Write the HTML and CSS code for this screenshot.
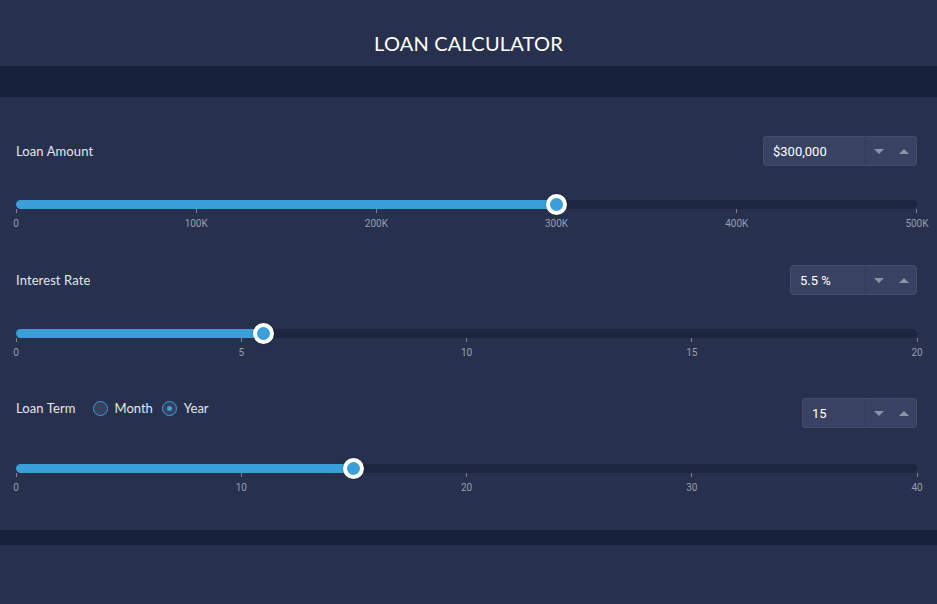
FILE: index.html
```html
<!DOCTYPE html>
<html lang="en">
<head>
    <meta charset="UTF-8">
    <meta name="viewport" content="width=device-width, initial-scale=1.0">
    <title>Loan Calculator</title>
    <link rel="stylesheet" href="styles.css">
</head>
<body>

<div class="header">
    <div class="title">LOAN CALCULATOR</div>
</div>
<div class="band"></div>

<div class="calculator">

    <!-- Loan amount -->
    <div class="field">
        <div class="field-head">
            <label class="field-label" for="amount">Loan Amount</label>
            <div class="spinner spinner-wide">
                <input type="text" id="amount" value="$300,000">
                <div class="spin-buttons">
                    <button class="spin-down"></button>
                    <button class="spin-up"></button>
                </div>
            </div>
        </div>
        <div class="slider">
            <div class="track">
                <div class="fill" style="width: 60%"></div>
                <div class="thumb" style="left: 60%"></div>
            </div>
            <div class="scale">
                <div class="mark"><span class="tick"></span><span>0</span></div>
                <div class="mark"><span class="tick"></span><span>100K</span></div>
                <div class="mark"><span class="tick"></span><span>200K</span></div>
                <div class="mark"><span class="tick"></span><span>300K</span></div>
                <div class="mark"><span class="tick"></span><span>400K</span></div>
                <div class="mark"><span class="tick"></span><span>500K</span></div>
            </div>
        </div>
    </div>

    <!-- Interest rate -->
    <div class="field">
        <div class="field-head">
            <label class="field-label" for="rate">Interest Rate</label>
            <div class="spinner spinner-mid">
                <input type="text" id="rate" value="5.5 %">
                <div class="spin-buttons">
                    <button class="spin-down"></button>
                    <button class="spin-up"></button>
                </div>
            </div>
        </div>
        <div class="slider">
            <div class="track">
                <div class="fill" style="width: 27.5%"></div>
                <div class="thumb" style="left: 27.5%"></div>
            </div>
            <div class="scale">
                <div class="mark"><span class="tick"></span><span>0</span></div>
                <div class="mark"><span class="tick"></span><span>5</span></div>
                <div class="mark"><span class="tick"></span><span>10</span></div>
                <div class="mark"><span class="tick"></span><span>15</span></div>
                <div class="mark"><span class="tick"></span><span>20</span></div>
            </div>
        </div>
    </div>

    <!-- Loan term -->
    <div class="field field-term">
        <div class="field-head">
            <div class="term-group">
                <label class="field-label" for="term">Loan Term</label>
                <label class="radio"><input type="radio" name="unit" value="month"> Month</label>
                <label class="radio"><input type="radio" name="unit" value="year" checked> Year</label>
            </div>
            <div class="spinner spinner-small">
                <input type="text" id="term" value="15">
                <div class="spin-buttons">
                    <button class="spin-down"></button>
                    <button class="spin-up"></button>
                </div>
            </div>
        </div>
        <div class="slider">
            <div class="track">
                <div class="fill" style="width: 37.5%"></div>
                <div class="thumb" style="left: 37.5%"></div>
            </div>
            <div class="scale">
                <div class="mark"><span class="tick"></span><span>0</span></div>
                <div class="mark"><span class="tick"></span><span>10</span></div>
                <div class="mark"><span class="tick"></span><span>20</span></div>
                <div class="mark"><span class="tick"></span><span>30</span></div>
                <div class="mark"><span class="tick"></span><span>40</span></div>
            </div>
        </div>
    </div>

</div>

<div class="band band-thin"></div>

</body>
</html>
```

FILE: styles.css
```css
/* Color scheme */
:root {
    --navy: #27304d;
    --deep-navy: #18213b;
    --track: #1e2540;
    --blue: #3a9fd8;
    --field: #394263;
    --muted: #9a9eae;
    --text: #e3e6ee;
}

* {
    box-sizing: border-box;
}

body {
    font-family: Lato, 'Open Sans', sans-serif;
    background-color: var(--navy);
    color: var(--text);
    margin: 0;
    padding: 0;
}

.header {
    height: 66px;
    padding-top: 31px;
    text-align: center;
}

.title {
    font-size: 20px;
    line-height: 24px;
    color: #ffffff;
    letter-spacing: 0.2px;
}

.band {
    height: 31px;
    background-color: var(--deep-navy);
}

.band-thin {
    height: 15px;
}

.calculator {
    padding: 39px 20px 36px 16px;
}

.field {
    margin-bottom: 35px;
}

.field:last-child {
    margin-bottom: 0;
}

.field-head {
    display: flex;
    justify-content: space-between;
    align-items: center;
}

.field-label {
    font-size: 13px;
    letter-spacing: 0.1px;
}

/* Number spinner */
.spinner {
    display: flex;
    height: 30px;
    background-color: var(--field);
    border: 1px solid #434c6d;
    border-radius: 3px;
}

.spinner input {
    width: 100%;
    min-width: 0;
    background: none;
    border: none;
    border-right: 1px solid #323a5a;
    color: #ffffff;
    font-family: Roboto, sans-serif;
    font-size: 13px;
    padding: 0 9px;
    outline: none;
}

.spinner-wide {
    width: 154px;
}

.spinner-mid {
    width: 127px;
}

.spinner-small {
    width: 115px;
}

.spin-buttons {
    display: flex;
    flex: 0 0 50px;
}

.spin-buttons button {
    flex: 1;
    background: none;
    border: none;
    padding: 0;
    position: relative;
    cursor: pointer;
}

.spin-buttons button:before {
    content: "";
    position: absolute;
    left: 50%;
    top: 50%;
    margin-left: -5px;
    margin-top: -2px;
    border-left: 5px solid transparent;
    border-right: 5px solid transparent;
}

.spin-down:before {
    border-top: 5px solid #8e92a4;
}

.spin-up:before {
    border-bottom: 5px solid #8e92a4;
}

/* Slider */
.slider {
    margin-top: 34px;
}

.track {
    position: relative;
    height: 9px;
    background-color: var(--track);
    border-radius: 5px;
}

.fill {
    height: 100%;
    background-color: var(--blue);
    border-radius: 5px 0 0 5px;
}

.thumb {
    position: absolute;
    top: 50%;
    width: 21px;
    height: 21px;
    margin: -10.5px 0 0 -10.5px;
    background-color: var(--blue);
    border: 4.5px solid #ffffff;
    border-radius: 50%;
    box-shadow: 0 0 2px rgba(0, 0, 0, 0.3);
}

.scale {
    display: flex;
    justify-content: space-between;
    height: 21px;
}

.mark {
    width: 0;
    display: flex;
    flex-direction: column;
    align-items: center;
    font-family: Roboto, sans-serif;
    font-size: 10px;
    line-height: 12px;
    color: var(--muted);
    white-space: nowrap;
}

.tick {
    width: 1px;
    height: 5px;
    margin-bottom: 5px;
    background-color: #7d8296;
}

/* Loan term */
.field-term .field-head {
    align-items: flex-start;
}

.field-term .spinner {
    margin-top: 4px;
}

.field-term .slider {
    margin-top: 36px;
}

.term-group {
    display: flex;
    align-items: center;
    margin-top: 6px;
    height: 16px;
}

.radio {
    display: flex;
    align-items: center;
    font-size: 13px;
    margin-left: 17px;
}

.radio + .radio {
    margin-left: 9px;
}

.radio input {
    appearance: none;
    -webkit-appearance: none;
    width: 15px;
    height: 15px;
    margin: 0 7px 0 0;
    border: 1.5px solid var(--blue);
    border-radius: 50%;
    background-color: #36405f;
    position: relative;
}

.radio input:checked:before {
    content: "";
    position: absolute;
    left: 50%;
    top: 50%;
    width: 5px;
    height: 5px;
    margin: -2.5px 0 0 -2.5px;
    border-radius: 50%;
    background-color: var(--blue);
}
```
